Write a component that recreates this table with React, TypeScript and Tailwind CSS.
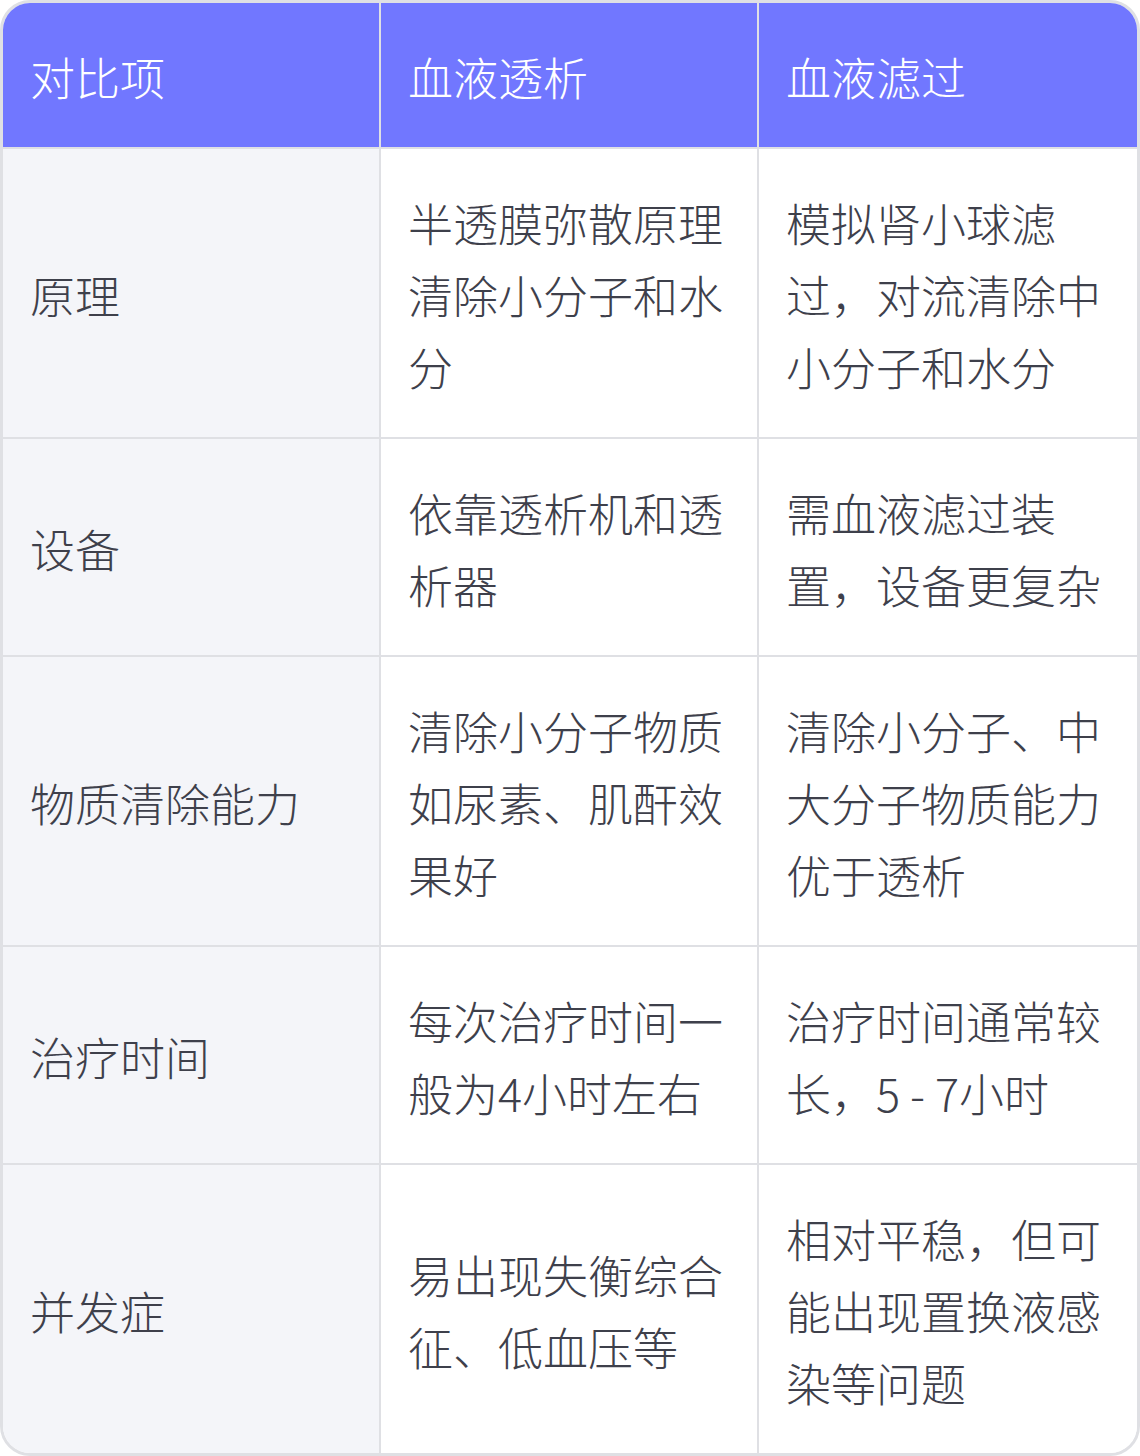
import React from "react";

const rows: [string, string, string][] = [
  ["原理", "半透膜弥散原理清除小分子和水分", "模拟肾小球滤过，对流清除中小分子和水分"],
  ["设备", "依靠透析机和透析器", "需血液滤过装置，设备更复杂"],
  ["物质清除能力", "清除小分子物质如尿素、肌酐效果好", "清除小分子、中大分子物质能力优于透析"],
  ["治疗时间", "每次治疗时间一般为4小时左右", "治疗时间通常较长，5 - 7小时"],
  ["并发症", "易出现失衡综合征、低血压等", "相对平稳，但可能出现置换液感染等问题"],
];

export default function App() {
  return (
    <div
      className="w-[1140px] h-[1456px] bg-white"
      style={{ fontFamily: '"Noto Sans CJK SC", "Noto Sans", sans-serif' }}
    >
      <div className="w-full h-full border-[3px] border-[#dfe0e4] rounded-[30px] overflow-hidden flex flex-col">
        <div className="grid grid-cols-3 bg-[#7177ff] border-b-2 border-[#dfe0e4]">
          {["对比项", "血液透析", "血液滤过"].map((h, i) => (
            <div
              key={h}
              className={`px-[27px] pt-[38px] pb-[34px] text-[45px] leading-[72px] font-light text-white ${i < 2 ? "border-r-2 border-[#dfe0e4]" : ""}`}
            >
              {h}
            </div>
          ))}
        </div>
        {rows.map((r, ri) => (
          <div
            key={ri}
            className={`grid grid-cols-3 ${ri < rows.length - 1 ? "border-b-2 border-[#dfe0e4]" : "flex-1"}`}
          >
            {r.map((c, ci) => (
              <div
                key={ci}
                className={`flex items-center px-[27px] pt-[38px] pb-[34px] text-[45px] leading-[72px] font-light text-[#3e404b] ${ci === 0 ? "bg-[#f4f5f9]" : "bg-white"} ${ci < 2 ? "border-r-2 border-[#dfe0e4]" : ""}`}
              >
                <span>{c}</span>
              </div>
            ))}
          </div>
        ))}
      </div>
    </div>
  );
}
